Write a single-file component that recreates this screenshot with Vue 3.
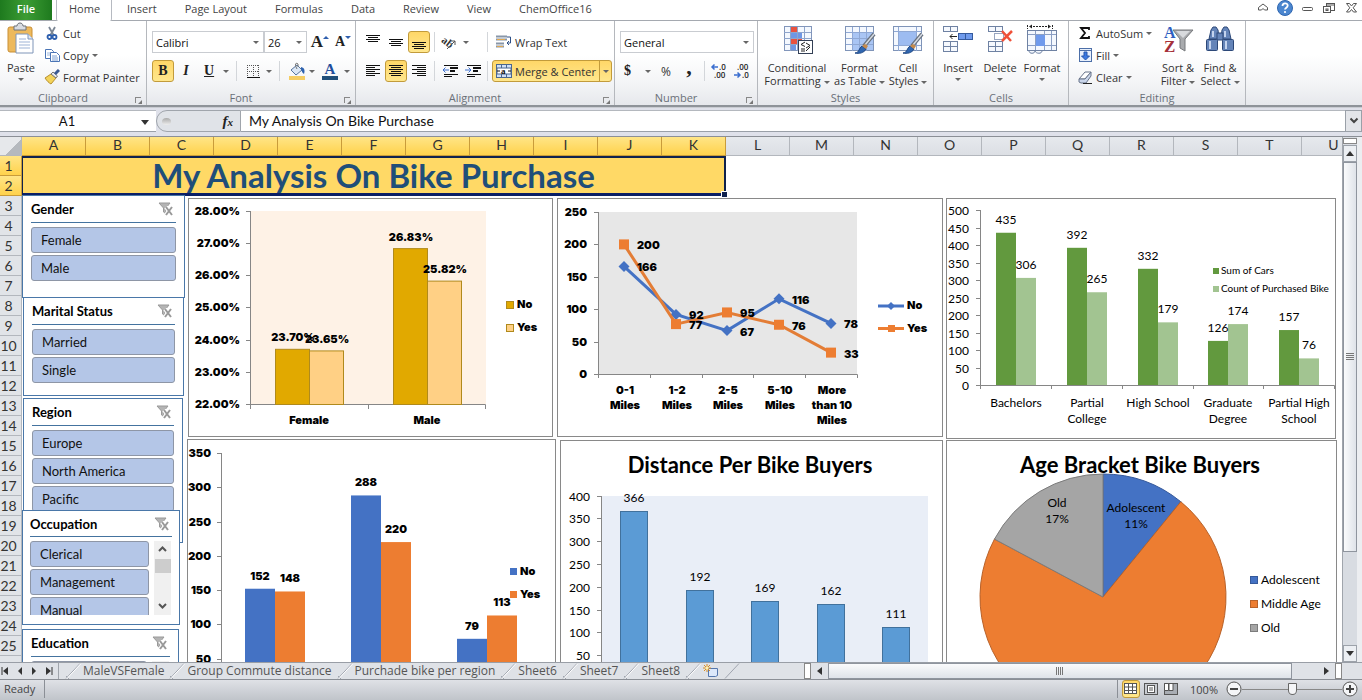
<script setup>
import { ref } from 'vue'

const tabs = ['Insert', 'Page Layout', 'Formulas', 'Data', 'Review', 'View', 'ChemOffice16']
const columns = 'ABCDEFGHIJKLMNOPQRSTU'.split('')
const sheets = ['MaleVSFemale', 'Group Commute distance', 'Purchade bike per region', 'Sheet6', 'Sheet7', 'Sheet8']
const formula = ref('My Analysis On Bike Purchase')
const cellName = ref('A1')
const zoom = ref(50)

const slicers = [
  { id: 'gender', title: 'Gender', items: ['Female', 'Male'] },
  { id: 'marital', title: 'Marital Status', items: ['Married', 'Single'] },
  { id: 'region', title: 'Region', items: ['Europe', 'North America', 'Pacific'] },
  { id: 'occupation', title: 'Occupation', items: ['Clerical', 'Management', 'Manual'], scroll: true },
  { id: 'education', title: 'Education', items: ['Bachelors'], scroll: true },
]

const rateY = (v) => 404 - (v - 22) * 32.17
const rates = [
  { x: 275, v: 23.7, tx: 293, c: '#e1a900' },
  { x: 309, v: 23.65, tx: 327, c: '#ffd085' },
  { x: 393, v: 26.83, tx: 411, c: '#e1a900' },
  { x: 427, v: 25.82, tx: 445, c: '#ffd085' },
]

const lineX = [624, 676, 727, 779, 831]
const lineY = (v) => 374 - v * 0.648
const series = {
  no: [166, 92, 67, 116, 78],
  yes: [200, 77, 95, 76, 33],
}
const points = (vals) => vals.map((v, i) => `${lineX[i]},${lineY(v)}`).join(' ')
const distances = [['0-1', 'Miles'], ['1-2', 'Miles'], ['2-5', 'Miles'], ['5-10', 'Miles'], ['More', 'than 10', 'Miles']]

const eduX = (i) => 1016 + Math.round(i * 70.8)
const eduY = (v) => 385 - v * 0.35
const education = [
  { label: ['Bachelors'], a: 435, b: 306 },
  { label: ['Partial', 'College'], a: 392, b: 265 },
  { label: ['High School'], a: 332, b: 179 },
  { label: ['Graduate', 'Degree'], a: 126, b: 174 },
  { label: ['Partial High', 'School'], a: 157, b: 76 },
]

const regionY = (v) => 693 - v * 0.686
const regions = [
  { x: 245, no: 152, yes: 148 },
  { x: 351, no: 288, yes: 220 },
  { x: 457, no: 79, yes: 113 },
]

const buyersY = (v) => 678 - v * 0.456
const buyers = [366, 192, 169, 162, 111].map((v, i) => ({ v, x: 620 + Math.round(i * 65.5) }))

const arc = (from, to) => {
  const p = (f) => `${1103 + 123 * Math.sin(f * 2 * Math.PI)} ${597 - 123 * Math.cos(f * 2 * Math.PI)}`
  return `M1103 597L${p(from)}A123 123 0 ${to - from > 0.5 ? 1 : 0} 1 ${p(to)}Z`
}
const slices = [
  { d: arc(0, 0.109), c: '#4472c4', s: '#35599b' },
  { d: arc(0.109, 0.828), c: '#ed7d31', s: '#b8622a' },
  { d: arc(0.828, 1), c: '#a5a5a5', s: '#7c7c7c' },
]
</script>

<template>
  <div class="app">
    <nav class="tabbar" aria-label="Ribbon tabs">
      <button class="file">File</button>
      <button class="tab active">Home</button>
      <button v-for="t in tabs" :key="t" class="tab">{{ t }}</button>
      <div class="winctl">
        <button aria-label="Minimize ribbon"><svg width="16" height="16" viewBox="0 0 16 16"><path d="M3.500 7.500L8 4l4.500 3.500v2.500h-3L8 8.500 6.500 10h-3z" fill="#fff" stroke="#555"/></svg></button>
        <button aria-label="Help"><svg width="16" height="16" viewBox="0 0 16 16"><circle cx="8" cy="8" r="7.500" fill="#4b86cf" stroke="#2f66b0"/><path d="M5.500 6c0-3.600 5.200-3.400 5.200-.4C10.700 7.600 8 7.800 8 9.600" fill="none" stroke="#fff" stroke-width="1.800"/><circle cx="8" cy="12" r="1.100" fill="#fff"/></svg></button>
        <button aria-label="Minimize"><svg width="16" height="16" viewBox="0 0 16 16"><rect x="3.500" y="7.500" width="10" height="3" rx="1" fill="#fff" stroke="#555"/></svg></button>
        <button aria-label="Restore"><svg width="16" height="16" viewBox="0 0 16 16" fill="#fff" stroke="#555"><rect x="5.500" y="3.500" width="8" height="7"/><path d="M5.500 5h8"/><rect x="2.500" y="6.500" width="7" height="6"/><rect x="5" y="9" width="2" height="1.500"/></svg></button>
        <button aria-label="Close"><svg width="16" height="16" viewBox="0 0 16 16"><path d="M3.500 3.500h3L8.500 6l2-2.500h3L10.200 7.800l3.300 4.200h-3l-2-2.500-2 2.500h-3l3.300-4.200z" fill="#fff" stroke="#555"/></svg></button>
      </div>
    </nav>

    <div class="ribbon">
      <section class="group clipboard">
        <div class="content">
          <button class="big">
            <svg width="32" height="34" viewBox="0 0 32 34"><rect x="3" y="5" width="24" height="25" rx="2" fill="#edb95c" stroke="#c98f35"/><path d="M9 8V4h3c0-4 6-4 6 0h3v4z" fill="#d8dce2" stroke="#6d7278"/><path d="M11 12h12l5 5v14H11z" fill="#fff" stroke="#7f95b8"/><path d="M23 12v5h5" fill="#dfe8f5" stroke="#7f95b8"/><path d="M14 17h7M14 20h11M14 23h11M14 26h11" stroke="#9db3d6"/></svg>
            <span>Paste</span><i class="arrow"></i>
          </button>
          <div class="stack">
            <button class="small"><svg width="16" height="16" viewBox="0 0 16 16"><path d="M5 2l4.500 8M11 2L6.500 10" stroke="#7b8694" stroke-width="1.800"/><circle cx="5.500" cy="12" r="2" fill="none" stroke="#2d5fae" stroke-width="1.800"/><circle cx="10.500" cy="12" r="2" fill="none" stroke="#2d5fae" stroke-width="1.800"/></svg>Cut</button>
            <button class="small"><svg width="16" height="16" viewBox="0 0 16 16" fill="#fff" stroke="#4a74b5"><path d="M1.500 2.500h6l2 2v7h-8z"/><path d="M3 6h4M3 8h4" stroke="#9db8de"/><path d="M6.500 5.500h6l3 3v6h-9z"/><path d="M8 9h5M8 11h6M8 13h6" stroke="#7d9fd2"/></svg>Copy<i class="arrow"></i></button>
            <button class="small"><svg width="16" height="16" viewBox="0 0 16 16"><path d="M1 9l6-4 5 4-5 6c-2-1-4-3-6-6z" fill="#f3d35a" stroke="#b78f2d"/><path d="M7 5l5 4 1.500-2-4.500-4z" fill="#e8ebf0" stroke="#777"/><path d="M11 5l4-4" stroke="#3b5a94" stroke-width="3"/></svg>Format Painter</button>
          </div>
        </div>
        <footer>Clipboard<i class="launch"></i></footer>
      </section>

      <section class="group font">
        <div class="rows">
          <div class="row">
            <label class="combo wide"><select aria-label="Font name"><option>Calibri</option></select><i class="arrow"></i></label>
            <label class="combo narrow"><select aria-label="Font size"><option>26</option></select><i class="arrow"></i></label>
            <button class="ic grow" aria-label="Increase font size"><b class="serif">A</b><i class="up"></i></button>
            <button class="ic shrink" aria-label="Decrease font size"><b class="serif">A</b><i class="down"></i></button>
          </div>
          <div class="row">
            <button class="ic on" aria-label="Bold"><b class="serif">B</b></button>
            <button class="ic" aria-label="Italic"><b class="serif it">I</b></button>
            <button class="split" aria-label="Underline"><b class="serif un">U</b><i class="arrow"></i></button>
            <i class="sep"></i>
            <button class="split" aria-label="Borders"><svg width="16" height="16" viewBox="0 0 16 16" shape-rendering="crispEdges"><path d="M2 2.500h12M2 8.500h12M2.500 2v11M8.500 2v11M13.500 2v11" stroke="#555" stroke-dasharray="1 1"/><path d="M2 14.500h13" stroke="#111"/></svg><i class="arrow"></i></button>
            <i class="sep"></i>
            <button class="split" aria-label="Fill color"><svg width="18" height="18" viewBox="0 0 18 18"><path d="M3 8l6-5 5 5-6 5z" fill="#dbe7f6" stroke="#55749d"/><path d="M9 7c-3-5-1-7 1-5v3" fill="none" stroke="#777"/><path d="M13 5c4 1 4 4 3 7-2-1-2-3-3-5z" fill="#2d62b0"/><rect x="1" y="14" width="16" height="4" fill="#f5cd63"/></svg><i class="arrow"></i></button>
            <button class="split color" aria-label="Font color"><b class="serif">A</b><i class="arrow"></i></button>
          </div>
        </div>
        <footer>Font<i class="launch"></i></footer>
      </section>

      <section class="group align">
        <div class="rows">
          <div class="row">
            <button class="ic" aria-label="Top align"><svg width="16" height="16" viewBox="0 0 16 16"><path d="M1 1.500h14M3 3.500h10M1 5.500h14M3 7.500h10" stroke="#111"/></svg></button>
            <button class="ic" aria-label="Middle align"><svg width="16" height="16" viewBox="0 0 16 16"><path d="M1 5.500h14M3 7.500h10M1 9.500h14M3 11.500h10" stroke="#111"/></svg></button>
            <button class="ic on" aria-label="Bottom align"><svg width="16" height="16" viewBox="0 0 16 16"><path d="M1 8.500h14M3 10.500h10M1 12.500h14M3 14.500h10" stroke="#111"/></svg></button>
            <i class="sep"></i>
            <button class="split orient" aria-label="Orientation"><svg width="18" height="16" viewBox="0 0 18 16"><text x="2" y="9" font-size="11" font-family="Liberation Serif, serif" font-weight="bold" fill="#333" transform="rotate(38 4 8)">ab</text><path d="M8 15l8-8M16 7h-4M16 7v4" stroke="#555" fill="none"/></svg><i class="arrow"></i></button>
            <i class="sep far"></i>
            <button class="small"><svg width="16" height="16" viewBox="0 0 16 16"><path d="M0 2.500h11M0 5.500h11M0 9.500h8M0 12.500h8" stroke="#8896a8" stroke-width="2"/><path d="M1 5.500h8M1 12.500h6" stroke="#e0a850"/><path d="M11 3h3.500v6H11M13 7l-2 2 2 2" fill="none" stroke="#2d4f86"/></svg>Wrap Text</button>
          </div>
          <div class="row">
            <button class="ic" aria-label="Align left"><svg width="16" height="16" viewBox="0 0 16 16"><path d="M1 2.500h14M1 4.500h9M1 6.500h14M1 8.500h9M1 10.500h14M1 12.500h9" stroke="#111"/></svg></button>
            <button class="ic on" aria-label="Center"><svg width="16" height="16" viewBox="0 0 16 16"><path d="M1 2.500h14M3 4.500h10M1 6.500h14M3 8.500h10M1 10.500h14M3 12.500h10" stroke="#111"/></svg></button>
            <button class="ic" aria-label="Align right"><svg width="16" height="16" viewBox="0 0 16 16"><path d="M1 2.500h14M6 4.500h9M1 6.500h14M6 8.500h9M1 10.500h14M6 12.500h9" stroke="#111"/></svg></button>
            <i class="sep"></i>
            <button class="ic" aria-label="Decrease indent"><svg width="16" height="16" viewBox="0 0 16 16"><path d="M2 2.500h14M2 11.500h14M2 13.500h8" stroke="#111"/><path d="M8 5h8M8 8h5" stroke="#111" stroke-width="2"/><path d="M7 7H1M3.500 4.500L1 7l2.500 2.500" stroke="#3b6fd0" fill="none"/></svg></button>
            <button class="ic" aria-label="Increase indent"><svg width="16" height="16" viewBox="0 0 16 16"><path d="M2 2.500h14M2 11.500h14M2 13.500h8" stroke="#111"/><path d="M8 5h8M8 8h5" stroke="#111" stroke-width="2"/><path d="M0 7h6M3.500 4.500L6 7 3.500 9.500" stroke="#3b6fd0" fill="none"/></svg></button>
            <i class="sep far"></i>
            <button class="small merge"><svg width="16" height="16" viewBox="0 0 16 16"><rect x=".5" y="1.500" width="15" height="13" fill="#cfdff5" stroke="#4a678f"/><path d="M5.500 1v4M10.500 1v4M5.500 11v4M10.500 11v4" stroke="#4a678f"/><rect x="1" y="5" width="14" height="6" fill="#fff" stroke="#4a678f"/><text x="5" y="10.500" font-size="9" font-weight="bold" font-family="Liberation Serif, serif" fill="#111">a</text><path d="M1 8h3M12 8h3" stroke="#111"/></svg>Merge &amp; Center<span class="drop"><i class="arrow"></i></span></button>
          </div>
        </div>
        <footer>Alignment<i class="launch"></i></footer>
      </section>

      <section class="group number">
        <div class="rows">
          <div class="row"><label class="combo full"><select aria-label="Number format"><option>General</option></select><i class="arrow"></i></label></div>
          <div class="row">
            <button class="split" aria-label="Currency"><b class="serif">$</b><i class="arrow"></i></button>
            <button class="ic sans">%</button>
            <button class="ic comma" aria-label="Comma style"><b class="serif">,</b></button>
            <i class="sep"></i>
            <button class="ic dec" aria-label="Increase decimal"><svg width="20" height="20" viewBox="0 0 20 20"><text x="9" y="9">.0</text><text x="4" y="17">.00</text><path d="M8 6H2M4.500 3.500L2 6l2.500 2.500" stroke="#3b6fd0" stroke-width="1.500" fill="none"/></svg></button>
            <button class="ic dec" aria-label="Decrease decimal"><svg width="20" height="20" viewBox="0 0 20 20"><text x="4" y="9">.00</text><text x="9" y="17">.0</text><path d="M1 14h6M4.500 11.500L7 14l-2.500 2.500" stroke="#3b6fd0" stroke-width="1.500" fill="none"/></svg></button>
          </div>
        </div>
        <footer>Number<i class="launch"></i></footer>
      </section>

      <section class="group styles">
        <div class="content">
          <button class="big w68">
            <svg width="32" height="34" viewBox="0 0 32 34"><rect x="3.500" y="4.500" width="27" height="24" fill="#f4f8fe" stroke="#8296bb"/><rect x="10" y="5" width="6" height="5" fill="#e8523f"/><rect x="10" y="11" width="11" height="5" fill="#6f97e4"/><rect x="10" y="17" width="11" height="5" fill="#e8523f"/><rect x="10" y="23" width="5" height="5" fill="#6f97e4"/><path d="M9.500 5v24M16.500 5v24M23.500 5v24M3 10.500h27M3 16.500h27M3 22.500h27" stroke="#8fa5cc" fill="none"/><rect x="17.500" y="18.500" width="14" height="13" fill="#fff" stroke="#333f55"/><path d="M24 20l-4 2.500 4 2M20 27h4M20 29h4M25 21l4 2.500-4 2.500M29 25l-4 4" stroke="#222" fill="none"/></svg>
            <span>Conditional</span><span>Formatting <i class="arrow"></i></span>
          </button>
          <button class="big w56">
            <svg width="32" height="34" viewBox="0 0 32 34"><rect x="1.500" y="4.500" width="28" height="24" fill="#f4f8fe" stroke="#7f94b8"/><rect x="9" y="11" width="20" height="17" fill="#a9c5f4"/><path d="M8.500 5v24M15.500 5v24M22.500 5v24M2 10.500h27M2 16.500h27M2 22.500h27" stroke="#8fa8d4"/><path d="M20 24L30 12" stroke="#68717e" stroke-width="4"/><path d="M21 23l9-11" stroke="#d5dae2" stroke-width="1.500"/><path d="M11 31c4 0 4-5 7-7l4 3c-2 4-7 5-11 4z" fill="#2f66b0" stroke="#1d4684"/><path d="M18 24l4 3 2-3-3-2z" fill="#c58a4b"/></svg>
            <span>Format</span><span>as Table <i class="arrow"></i></span>
          </button>
          <button class="big w40">
            <svg width="32" height="34" viewBox="0 0 32 34"><rect x="1.500" y="4.500" width="28" height="24" fill="#f4f8fe" stroke="#7f94b8"/><path d="M6.500 5v24M24.500 5v24M2 9.500h27M2 23.500h27" stroke="#8fa8d4"/><rect x="7" y="10" width="17" height="13" fill="#9dbcf1"/><path d="M20 24L30 12" stroke="#68717e" stroke-width="4"/><path d="M21 23l9-11" stroke="#d5dae2" stroke-width="1.500"/><path d="M11 31c4 0 4-5 7-7l4 3c-2 4-7 5-11 4z" fill="#2f66b0" stroke="#1d4684"/><path d="M18 24l4 3 2-3-3-2z" fill="#c58a4b"/></svg>
            <span>Cell</span><span>Styles <i class="arrow"></i></span>
          </button>
        </div>
        <footer>Styles</footer>
      </section>

      <section class="group cells">
        <div class="content">
          <button class="big w42">
            <svg width="32" height="34" viewBox="0 0 32 34"><g fill="#f6f9fe" stroke="#6f82a3"><rect x="1.500" y="4.500" width="14" height="5"/><rect x="1.500" y="19.500" width="14" height="10"/><path d="M8.500 4v6M8.500 20v10M1 24.500h15"/></g><rect x="16.500" y="11.500" width="14" height="6" fill="#6f9aec" stroke="#355a9d"/><path d="M23.500 11v7" stroke="#355a9d"/><path d="M15 14.500H8M10.500 12L8 14.500l2.500 2.500" stroke="#222" fill="none"/></svg>
            <span>Insert</span><i class="arrow"></i>
          </button>
          <button class="big w42">
            <svg width="32" height="34" viewBox="0 0 32 34"><g fill="#f6f9fe" stroke="#6f82a3"><rect x="4.500" y="4.500" width="14" height="5"/><rect x="4.500" y="19.500" width="14" height="10"/><path d="M11.500 4v6M11.500 20v10M4 24.500h15"/></g><rect x="10.500" y="11.500" width="9" height="6" fill="none" stroke="#334d80" stroke-dasharray="1 1"/><path d="M18 9l9 10M28 9l-10 10" stroke="#f05139" stroke-width="2.500"/></svg>
            <span>Delete</span><i class="arrow"></i>
          </button>
          <button class="big w42">
            <svg width="32" height="34" viewBox="0 0 32 34"><path d="M1.500 3v4M26.500 3v4M4 4.500h20" stroke="#222" stroke-dasharray="2 1"/><path d="M6 2.500L3 4.500l3 2zM22 2.500l3 2-3 2z" fill="#222"/><rect x="1.500" y="8.500" width="29" height="20" fill="#f4f8fe" stroke="#6f82a3"/><path d="M9.500 9v19M18.500 9v19M25.500 9v19M2 12.500h28M2 23.500h28" stroke="#8b9fc4"/><rect x="10" y="13" width="9" height="11" fill="#6f9aec"/><path d="M3 29c0 3 6 3 6 0 1 3 7 3 7 0" fill="#f4f8fe" stroke="#6f82a3"/></svg>
            <span>Format</span><i class="arrow"></i>
          </button>
        </div>
        <footer>Cells</footer>
      </section>

      <section class="group editing">
        <div class="content">
          <div class="stack">
            <button class="small"><svg width="16" height="16" viewBox="0 0 16 16"><path d="M12 5V3H4l4 5-4 5h8v-2" fill="none" stroke="#111" stroke-width="1.800"/></svg>AutoSum<i class="arrow"></i></button>
            <button class="small"><svg width="16" height="16" viewBox="0 0 16 16"><rect x="2.500" y="1.500" width="12" height="13" fill="#e8f0fc" stroke="#4d6fa8"/><path d="M3 3.500h11" stroke="#4d6fa8"/><path d="M7 5h3v4h2.500l-4 4-4-4H7z" fill="#3b78e0" stroke="#2457ac"/></svg>Fill<i class="arrow"></i></button>
            <button class="small"><svg width="16" height="16" viewBox="0 0 16 16"><path d="M2 10l6-7h6l-6 7z" fill="#fff" stroke="#68748a"/><path d="M2 10v3l2 1h5l5-7V3L8 10z" fill="#c9d5ea" stroke="#68748a"/><path d="M6 14.500h9" stroke="#222"/></svg>Clear<i class="arrow"></i></button>
          </div>
          <button class="big w42">
            <svg width="32" height="34" viewBox="0 0 32 34"><text x="2" y="16" font-size="16" font-weight="bold" font-family="Liberation Serif, serif" fill="#2f5fc0">A</text><text x="2" y="30" font-size="17" font-weight="bold" font-family="Liberation Serif, serif" fill="#a5303a">Z</text><path d="M11 8h20l-8 9v12l-5-3v-9z" fill="#a9abae" stroke="#77797c"/><path d="M14 9h14l-7 7z" fill="#d8dadd"/></svg>
            <span>Sort &amp;</span><span>Filter <i class="arrow"></i></span>
          </button>
          <button class="big w42">
            <svg width="32" height="34" viewBox="0 0 32 34"><g fill="#6484b8" stroke="#2c4878"><path d="M7 8l2-3h3l2 3 1 9H5z"/><path d="M18 8l2-3h3l2 3 2 9H17z"/><rect x="13" y="11" width="6" height="7"/><rect x="2.500" y="17.500" width="11" height="11" rx="1"/><rect x="18.500" y="17.500" width="11" height="11" rx="1"/></g><path d="M6 19v8M22 19v8M9 9v6M21 9v6" stroke="#c4d4ee" stroke-width="2"/></svg>
            <span>Find &amp;</span><span>Select <i class="arrow"></i></span>
          </button>
        </div>
        <footer>Editing</footer>
      </section>
    </div>

    <div class="formulabar">
      <input v-model="cellName" class="namebox" aria-label="Name box">
      <button class="namedrop" aria-label="Name list"><i class="arrow dark"></i></button>
      <div class="fxwrap"><i class="knob"></i><button class="fx" aria-label="Insert function">f<small>x</small></button></div>
      <input v-model="formula" class="formula" aria-label="Formula">
      <button class="expand" aria-label="Expand formula bar"><svg width="10" height="8" viewBox="0 0 10 8"><path d="M1.500 1.500L5 5l3.500-3.500" fill="none" stroke="#444" stroke-width="2"/></svg></button>
    </div>

    <main class="work">
      <div class="sheet">
        <table class="grid">
          <thead>
            <tr><th class="corner" aria-label="Select all"></th><th v-for="(c, i) in columns" :key="c" scope="col" :class="{ hot: i < 11 }">{{ c }}</th></tr>
          </thead>
          <tbody>
            <tr><th scope="row" class="hot">1</th><td colspan="11" rowspan="2" class="title">My Analysis On Bike Purchase</td><td colspan="10"></td></tr>
            <tr><th scope="row" class="hot">2</th><td colspan="10"></td></tr>
            <tr v-for="n in 23" :key="n"><th scope="row">{{ n + 2 }}</th><td colspan="21"></td></tr>
            <tr><th></th><td colspan="21"></td></tr>
          </tbody>
        </table>

        <div class="objects">
          <div class="slicers">
            <section v-for="s in slicers" :key="s.id" class="slicer" :class="s.id">
              <header><h3>{{ s.title }}</h3>
                <button aria-label="Clear filter"><svg width="16" height="14" viewBox="0 0 16 14"><path d="M1 1h11L8 6v6L5.500 10V6z" fill="#b4b4b4" stroke="#999"/><path d="M8 5l6 8M14 5l-6 8" stroke="#fff" stroke-width="4"/><path d="M8 5l6 8M14 5l-6 8" stroke="#999" stroke-width="2"/></svg></button>
              </header>
              <div class="slbody">
                <div class="items"><button v-for="it in s.items" :key="it">{{ it }}</button></div>
                <div v-if="s.scroll" class="slscroll">
                  <svg width="9" height="6" viewBox="0 0 9 6"><path d="M1 5l3.500-3.500L8 5" fill="none" stroke="#555" stroke-width="2"/></svg>
                  <i></i>
                  <svg width="9" height="6" viewBox="0 0 9 6"><path d="M1 1l3.500 3.500L8 1" fill="none" stroke="#555" stroke-width="2"/></svg>
                </div>
              </div>
            </section>
          </div>

          <div class="charts">
            <svg class="heavy" viewBox="187 197 369 242" role="img" aria-label="Purchase rate by gender">
              <rect class="frame" x="188.500" y="198.500" width="364" height="238" />
              <rect x="251" y="211" width="235" height="193" fill="#fef2e6" />
              <path class="axis" d="M250.500 211V409M247 404.500H485.500V409M368.500 404V409" />
              <g v-for="n in 7" :key="n">
                <path class="axis" :d="`M246 ${Math.round(rateY(21 + n)) + 0.5}h4`" />
                <text class="end" x="240" :y="Math.round(rateY(21 + n)) + 4">{{ 21 + n }}.00%</text>
              </g>
              <rect v-for="b in rates" :key="'b' + b.x" :x="b.x + 0.5" :y="rateY(b.v)" width="34" :height="404.5 - rateY(b.v)" :fill="b.c" stroke="#b08a1c" />
              <text v-for="b in rates" :key="'t' + b.x" :x="b.tx" :y="rateY(b.v) - 8">{{ b.v.toFixed(2) }}%</text>
              <text x="309" y="424">Female</text><text x="427" y="424">Male</text>
              <rect x="506.500" y="301.500" width="7" height="7" fill="#e1a900" stroke="#b08a1c" /><text class="start" x="517" y="308">No</text>
              <rect x="506.500" y="324.500" width="7" height="7" fill="#ffd085" stroke="#b08a1c" /><text class="start" x="517" y="331">Yes</text>
            </svg>

            <svg class="heavy" viewBox="556 197 388 242" role="img" aria-label="Purchases by commute distance">
              <rect class="frame" x="557.500" y="198.500" width="385" height="238" />
              <rect x="599" y="212" width="258" height="162" fill="#e7e7e7" />
              <path class="axis" d="M598.500 212V378M594 374.500H857.500V378M650.500 374v4M702.500 374v4M753.500 374v4M805.500 374v4" />
              <g v-for="n in 6" :key="n">
                <path class="axis" :d="`M594 ${Math.round(lineY(n * 50 - 50)) + 0.5}h4`" />
                <text class="end" x="587" :y="lineY(n * 50 - 50) + 4">{{ n * 50 - 50 }}</text>
              </g>
              <polyline :points="points(series.no)" fill="none" stroke="#4472c4" stroke-width="3" />
              <path v-for="(v, i) in series.no" :key="'n' + i" :d="`M${lineX[i]} ${lineY(v) - 5.5}l5.500 5.500-5.500 5.500-5.500-5.500z`" fill="#4472c4" />
              <polyline :points="points(series.yes)" fill="none" stroke="#e37d36" stroke-width="3" />
              <rect v-for="(v, i) in series.yes" :key="'y' + i" :x="lineX[i] - 5" :y="lineY(v) - 5" width="10" height="10" fill="#ed7d31" />
              <template v-for="(vals, k) in series" :key="k">
                <text v-for="(v, i) in vals" :key="k + i" class="start" :x="lineX[i] + 13" :y="lineY(v) + 5">{{ v }}</text>
              </template>
              <template v-for="(d, i) in distances" :key="'d' + i">
                <text v-for="(l, j) in d" :key="l" :x="lineX[i] + 1" :y="394 + j * 15">{{ l }}</text>
              </template>
              <path d="M878 306h26" stroke="#4472c4" stroke-width="3" /><path d="M891 302l4 4-4 4-4-4z" fill="#4472c4" />
              <text class="start" x="907" y="309">No</text>
              <path d="M878 328.500h26" stroke="#ed7d31" stroke-width="3" /><rect x="888" y="325" width="7" height="7" fill="#ed7d31" />
              <text class="start" x="907" y="332">Yes</text>
            </svg>

            <svg class="light" viewBox="944 197 394 242" role="img" aria-label="Cars and purchases by education">
              <rect class="frame" x="946.500" y="198.500" width="389" height="240" />
              <path class="axis" d="M980.500 210V389M976 385.500H1334.500V389M1051.500 385v4M1122.500 385v4M1193.500 385v4M1263.500 385v4" />
              <g v-for="n in 11" :key="n">
                <path class="axis" :d="`M976 ${Math.round(eduY(n * 50 - 50)) + 0.5}h4`" />
                <text class="end" x="969" :y="eduY(n * 50 - 50) + 5">{{ n * 50 - 50 }}</text>
              </g>
              <g v-for="(e, i) in education" :key="i">
                <rect :x="eduX(i) - 20" :y="eduY(e.a)" width="20" :height="385 - eduY(e.a)" fill="#62993e" />
                <rect :x="eduX(i)" :y="eduY(e.b)" width="20" :height="385 - eduY(e.b)" fill="#a2c491" />
                <text :x="eduX(i) - 10" :y="eduY(e.a) - 9">{{ e.a }}</text>
                <text :x="eduX(i) + 10" :y="eduY(e.b) - 9">{{ e.b }}</text>
                <text v-for="(l, j) in e.label" :key="l" :x="eduX(i)" :y="407 + j * 16">{{ l }}</text>
              </g>
              <rect x="1213" y="268" width="6" height="6" fill="#62993e" /><text class="start tiny" x="1221" y="274">Sum of Cars</text>
              <rect x="1213" y="286" width="6" height="6" fill="#a2c491" /><text class="start tiny" x="1221" y="292">Count of Purchased Bike</text>
            </svg>

            <svg class="heavy" viewBox="187 439 369 280" role="img" aria-label="Purchases by region">
              <rect class="frame" x="187.500" y="439.500" width="368" height="279" />
              <path class="axis" d="M221.500 453V693.500H540" />
              <g v-for="n in 8" :key="n">
                <path class="axis" :d="`M217 ${Math.round(regionY(n * 50 - 50)) + 0.5}h4`" />
                <text class="end" x="211" :y="regionY(n * 50 - 50) + 4">{{ n * 50 - 50 }}</text>
              </g>
              <g v-for="r in regions" :key="r.x">
                <rect :x="r.x" :y="regionY(r.no)" width="30" :height="693 - regionY(r.no)" fill="#4472c4" />
                <rect :x="r.x + 30" :y="regionY(r.yes)" width="30" :height="693 - regionY(r.yes)" fill="#ed7d31" />
                <text :x="r.x + 15" :y="regionY(r.no) - 9">{{ r.no }}</text>
                <text :x="r.x + 45" :y="regionY(r.yes) - 9">{{ r.yes }}</text>
              </g>
              <rect x="510" y="568" width="7" height="7" fill="#4472c4" /><text class="start" x="520" y="575">No</text>
              <rect x="510" y="591" width="7" height="7" fill="#ed7d31" /><text class="start" x="520" y="598">Yes</text>
            </svg>

            <svg class="light" viewBox="556 439 388 280" role="img" aria-label="Distance per bike buyers">
              <rect class="frame" x="560.500" y="440.500" width="382" height="278" />
              <text class="ctitle" x="750" y="473">Distance Per Bike Buyers</text>
              <rect x="602" y="496" width="326" height="182" fill="#e9eef7" />
              <path class="axis" d="M601.500 496V678.500H928" />
              <g v-for="n in 9" :key="n">
                <path class="axis" :d="`M597 ${Math.round(buyersY(n * 50 - 50)) + 0.5}h4`" />
                <text class="end" x="590" :y="buyersY(n * 50 - 50) + 5">{{ n * 50 - 50 }}</text>
              </g>
              <g v-for="b in buyers" :key="b.v">
                <rect :x="b.x + 0.5" :y="Math.round(buyersY(b.v)) + 0.5" width="27" :height="678 - buyersY(b.v)" fill="#5b9bd5" stroke="#41719c" />
                <text :x="b.x + 14" :y="buyersY(b.v) - 9">{{ b.v }}</text>
              </g>
            </svg>

            <svg class="light" viewBox="944 439 394 280" role="img" aria-label="Age bracket of bike buyers">
              <rect class="frame" x="946.500" y="440.500" width="390" height="278" />
              <path v-for="s in slices" :key="s.c" :d="s.d" :fill="s.c" :stroke="s.s" />
              <text class="ctitle" x="1140" y="473">Age Bracket Bike Buyers</text>
              <text x="1057" y="507">Old</text><text x="1057" y="523">17%</text>
              <text x="1136" y="512">Adolescent</text><text x="1136" y="528">11%</text>
              <rect x="1250.500" y="576.500" width="7" height="7" fill="#4472c4" stroke="#35599b" /><text class="start" x="1261" y="584">Adolescent</text>
              <rect x="1250.500" y="600.500" width="7" height="7" fill="#ed7d31" stroke="#b8622a" /><text class="start" x="1261" y="608">Middle Age</text>
              <rect x="1250.500" y="624.500" width="7" height="7" fill="#a5a5a5" stroke="#7c7c7c" /><text class="start" x="1261" y="632">Old</text>
            </svg>
          </div>
        </div>
      </div>

      <div class="vscroll">
        <i class="vsplit"></i>
        <button aria-label="Scroll up"><i class="tri up"></i></button>
        <div class="vthumb"><i class="grip"></i></div>
        <div class="vtrack"></div>
        <button aria-label="Scroll down"><i class="tri down"></i></button>
      </div>
    </main>

    <div class="sheetbar">
      <div class="nav">
        <button aria-label="First sheet"><svg width="8" height="8" viewBox="0 0 8 8"><path d="M1 0v8" stroke="#333"/><path d="M7 0v8L2 4z" fill="#333"/></svg></button>
        <button aria-label="Previous sheet"><svg width="8" height="8" viewBox="0 0 8 8"><path d="M6 0v8L2 4z" fill="#333"/></svg></button>
        <button aria-label="Next sheet"><svg width="8" height="8" viewBox="0 0 8 8"><path d="M2 0v8l4-4z" fill="#333"/></svg></button>
        <button aria-label="Last sheet"><svg width="8" height="8" viewBox="0 0 8 8"><path d="M7 0v8" stroke="#333"/><path d="M1 0v8l5-4z" fill="#333"/></svg></button>
      </div>
      <div class="stabs">
        <template v-for="s in sheets" :key="s">
          <svg class="slash" width="16" height="16" viewBox="0 0 16 16"><path d="M1 15.500L15 .5M1 13l3 3" stroke="#a0a6af" fill="none"/><path d="M2 15.500L16 .5" stroke="#fff"/></svg>
          <button>{{ s }}</button>
        </template>
        <svg class="slash" width="16" height="16" viewBox="0 0 16 16"><path d="M1 15.500L15 .5M1 13l3 3" stroke="#a0a6af" fill="none"/><path d="M2 15.500L16 .5" stroke="#fff"/></svg>
        <button aria-label="Insert worksheet"><svg width="16" height="14" viewBox="0 0 16 14"><path d="M5.500 4.500h9v7l-2 1h-7z" fill="#dce8fa" stroke="#5577ad"/><path d="M4 0v8M0 4h8M1 1l6 6M7 1L1 7" stroke="#d98e24"/><circle cx="4" cy="4" r="1.500" fill="#fff3b0"/></svg></button>
        <svg class="slash" width="16" height="16" viewBox="0 0 16 16"><path d="M1 15.500L15 .5" stroke="#a0a6af"/></svg>
      </div>
      <div class="hscroll">
        <i class="hsplit"></i>
        <button aria-label="Scroll left"><i class="tri left"></i></button>
        <div class="hthumb"><i class="grip v"></i></div>
        <div class="htrack"></div>
        <button aria-label="Scroll right"><i class="tri right"></i></button>
        <i class="hsplit"></i>
      </div>
      <div class="cornerbox"></div>
    </div>

    <footer class="status">
      <span class="ready">Ready</span>
      <div class="views">
        <button class="on" aria-label="Normal view"><svg width="14" height="12" viewBox="0 0 14 12"><rect x=".5" y=".5" width="12" height="10" fill="#fff" stroke="#555"/><path d="M4.500 0v11M8.500 0v11M0 4h13M0 7.500h13" stroke="#555"/></svg></button>
        <button aria-label="Page layout view"><svg width="14" height="12" viewBox="0 0 14 12"><rect x=".5" y=".5" width="13" height="11" fill="#c9ccd1" stroke="#555"/><rect x="3.500" y="2.500" width="7" height="7" fill="#fff" stroke="#555"/><path d="M5 5h4M5 7h4" stroke="#555"/></svg></button>
        <button aria-label="Page break view"><svg width="14" height="12" viewBox="0 0 14 12"><rect x=".5" y=".5" width="13" height="11" fill="#a9adb3" stroke="#555"/><path d="M.5 .5h4v7h-4zM5 .5h4v7H5z" fill="#fff" stroke="#555"/></svg></button>
      </div>
      <button class="pct">100%</button>
      <button class="round" aria-label="Zoom out"><svg width="16" height="16" viewBox="0 0 16 16"><circle cx="8" cy="8" r="7" fill="#f4f5f7" stroke="#555"/><path d="M4 8h8" stroke="#444" stroke-width="2"/></svg></button>
      <input v-model="zoom" type="range" class="zoom" aria-label="Zoom">
      <button class="round" aria-label="Zoom in"><svg width="16" height="16" viewBox="0 0 16 16"><circle cx="8" cy="8" r="7" fill="#f4f5f7" stroke="#555"/><path d="M4 8h8M8 4v8" stroke="#444" stroke-width="2"/></svg></button>
    </footer>
  </div>
</template>

<style>
body { margin: 0; overflow: hidden; }
</style>

<style scoped>
.app { --ui: "Open Sans", "Noto Sans", sans-serif; --cell: Lato, "Open Sans", sans-serif; display: flex; flex-direction: column; height: 100vh; font: 11px/13px var(--ui); color: #333; background: #fff; overflow: hidden; }
* { box-sizing: border-box; }
button, input, select { font: inherit; color: inherit; background: none; border: 0; padding: 0; margin: 0; border-radius: 0; outline: 0; }
button { white-space: nowrap; }
svg { display: block; flex: none; }
h3 { margin: 0; }
.arrow { flex: none; display: inline-block; border: 3px solid transparent; border-top-color: #666; border-bottom: 0; vertical-align: middle; }
.arrow.dark { border-width: 5px 4px 0; border-top-color: #333; }

.tabbar { display: flex; flex: none; height: 21px; border-bottom: 1px solid #a5a9b0; color: #444; }
.file { width: 52px; margin-right: 4px; height: 20px; padding-bottom: 3px; background: linear-gradient(90deg, #1e7a1e, #3c9c34 50%, #1e7a1e); color: #fff; font-weight: 600; }
.tab { padding: 0 14px 3px; height: 20px; }
.tab.active { height: 21px; width: 56px; padding: 0 12px 4px; margin-bottom: -1px; background: #fff; border: 1px solid #b6bac1; border-width: 0 1px; border-radius: 0 0 2px 2px; margin-right: 1px; }
.winctl { display: flex; margin-left: auto; padding-right: 3px; gap: 6px; align-items: flex-start; }

.ribbon { display: flex; flex: none; height: 86px; background: linear-gradient(#fff 40%, #f3f4f6 75%, #e6e8ec); border-bottom: 2px solid #8e9399; }
.group { flex: none; display: flex; flex-direction: column; border-right: 1px solid #b5b8bd; }
.clipboard { width: 147px; } .font { width: 209px; } .align { width: 259px; } .number { width: 143px; } .styles { width: 176px; } .cells { width: 135px; } .editing { width: 177px; }
.content { display: flex; height: 69px; padding: 1px 3px 0; }
.styles .content { padding-left: 5px; }
.rows { height: 69px; padding: 10px 5px 0; display: flex; flex-direction: column; gap: 7px; }
.align .rows { padding-left: 6px; padding-right: 2px; }
.row { display: flex; height: 22px; align-items: center; gap: 1px; }
.group footer { position: relative; text-align: center; color: #6a7078; height: 15px; padding: 1px 20px 0 0; line-height: 13px; }
.styles footer, .cells footer, .editing footer { padding-right: 0; }
.launch { position: absolute; right: 5px; bottom: 2px; width: 6px; height: 6px; border: 1px solid #888; border-width: 1px 0 0 1px; }
.launch::after { content: ""; position: absolute; right: -1px; bottom: -1px; border: 2px solid transparent; border-right-color: #777; border-bottom-color: #777; }
.big { display: flex; flex-direction: column; align-items: center; width: 36px; height: 66px; }
.big > .arrow { margin-top: 4px; }
.big > svg { margin-bottom: 5px; }
.w68 { width: 68px; } .w56 { width: 57px; } .w40 { width: 40px; } .w42 { width: 42px; }
.stack { display: flex; flex-direction: column; padding-left: 5px; align-items: flex-start; }
.small { display: flex; align-items: center; height: 22px; gap: 3px; }
.editing .stack { width: 85px; }
.editing .content { padding-right: 0; }
.ic { width: 22px; height: 22px; display: flex; align-items: center; justify-content: center; flex: none; }
.on { background: linear-gradient(#ffd768, #ffe78d); border: 1px solid #c29b3b; border-radius: 3px; }
.split { width: 34px; height: 22px; display: flex; align-items: center; justify-content: space-between; padding: 0 3px 0 4px; flex: none; }
.sep { width: 1px; height: 20px; background: #d3d6da; margin: 0 3px; flex: none; }
.row .sep.far { margin-left: auto; }
.orient { width: 30px; padding: 0; }
.align .row .small { width: 120px; padding: 0 0 0 4px; }
.align .row .merge { border: 1px solid #c29b3b; border-radius: 3px; padding-left: 3px; background: linear-gradient(#ffd768, #ffe78d); }
.drop { margin-left: auto; width: 12px; height: 20px; display: flex; align-items: center; justify-content: center; border-left: 1px solid #c29b3b; flex: none; }
.serif { font: bold 14px/16px "Liberation Serif", serif; color: #222; }
.it { font-style: italic; } .un { text-decoration: underline; padding-left: 2px; }
.grow .serif { font-size: 17px; } .shrink .serif { font-size: 14px; }
.grow .up, .shrink .down { border: 3px solid transparent; align-self: flex-start; margin-top: 5px; }
.grow .up { border-top: 0; border-bottom-color: #2f5fae; } .shrink .down { border-bottom: 0; border-top-color: #2f5fae; }
.color .serif { font-size: 15px; color: #1f4e9d; border-bottom: 4px solid #1f4e79; width: 16px; line-height: 14px; text-align: center; }
.color { padding: 0 3px; }
.sans { font-size: 12px; }
.comma .serif { font-size: 22px; line-height: 6px; padding-bottom: 8px; }
.dec text { font: 600 8px var(--ui); fill: #222; }
.combo { position: relative; height: 22px; border: 1px solid #c9ccd1; background: #fff; flex: none; display: flex; align-items: center; }
.combo select { appearance: none; width: 100%; height: 20px; padding-left: 3px; color: #111; }
.combo .arrow { position: absolute; right: 4px; pointer-events: none; }
.wide { width: 112px; } .narrow { width: 43px; margin-left: -1px; margin-right: 1px; } .full { width: 134px; }

.formulabar { display: flex; flex: none; height: 30px; padding: 2px 0 6px; background: #dfe1ea; border-top: 1px solid #c9ccd2; border-bottom: 1px solid #8b8f96; }
.formulabar > * { height: 22px; background: #fff; border-bottom: 1px solid #9aa0a8; border-top: 1px solid #b4b8be; }
.namebox { width: 134px; text-align: center; font: 13px/18px var(--cell); color: #111; padding-bottom: 1px; }
.namedrop { width: 22px; }
.fxwrap { display: flex; width: 85px; background: #e0e3e8; border: 1px solid #a0a5ac; border-radius: 12px 0 0 12px; align-items: center; justify-content: space-between; padding: 0 7px 0 5px; }
.knob { width: 9px; height: 7px; border-radius: 50%; background: linear-gradient(#aaa, #eee); }
.fx { font: italic bold 15px/16px "Liberation Serif", serif; color: #222; }
.fx small { font-size: 11px; }
.formula { flex: 1; min-width: 0; padding: 0 0 1px 8px; font: 14px/19px var(--cell); color: #111; }
.expand { width: 17px; display: flex; align-items: center; justify-content: center; background: #e3e5e9; border: 1px solid #9aa0a8; }

.work { display: flex; flex: 1; min-height: 0; }
.sheet { position: relative; flex: 1; min-width: 0; overflow: hidden; }
.grid { border-collapse: separate; border-spacing: 0; table-layout: fixed; width: 1366px; }
.grid th { font: 14px/17px var(--cell); color: #333; padding: 0; width: 64px; background: #e1e4e8; border: 1px solid #b3b7bd; border-width: 0 1px 1px 0; text-align: center; }
.grid tr { height: 20px; }
.grid thead tr { height: 19px; }
.grid thead th { background: linear-gradient(#e6e9ed, #dcdfe4); height: 19px; line-height: 16px; padding-bottom: 2px; }
.grid thead th.corner { width: 22px; background: linear-gradient(135deg, #e6e8eb 60%, #b5b9be 60%); }
.grid th.hot, .grid thead th.hot { background: linear-gradient(#ffe587, #ffd24c); border-color: #c99c3a; }
.grid tbody th { padding-right: 4px; }
.grid td { padding: 0; }
.grid .title { position: relative; background: #ffd966; border: 2px solid #10224d; border-left-width: 1px; border-bottom: 3px solid #0a1f66; text-align: center; font: bold 33px/35px var(--cell); color: #1f4e79; }
.title::after { content: ""; position: absolute; right: -3px; bottom: -4px; width: 5px; height: 5px; background: #10224d; border: 1px solid #fff; border-width: 1px 0 0 1px; }
.objects { position: absolute; top: 58px; left: 22px; right: 0; display: flex; align-items: flex-start; }
.slicers { width: 165px; flex: none; font: 13px/22px var(--cell); color: #111; display: flex; flex-direction: column; }
.slicer { position: relative; background: #fff; border: 1px solid #4a77a8; padding: 0 8px; width: 160px; overflow: hidden; margin-left: 1px; }
.slicer header { display: flex; justify-content: space-between; align-items: center; height: 27px; border-bottom: 1px solid #44739f; padding-right: 2px; }
.slicer h3 { font: bold 13px/20px var(--cell); color: #000; }
.items { display: flex; flex-direction: column; gap: 2px; flex: 1; overflow: hidden; }
.items button { flex: none; height: 26px; text-align: left; padding-left: 9px; border: 1px solid #8e96a6; border-radius: 3px; background: #b4c6e7; }
.slbody { display: flex; padding-top: 4px; }
.gender { height: 103px; width: 163px; margin-left: 0; }
.marital { height: 99px; margin-top: -1px; width: 161px; }
.region { height: 145px; margin-top: 2px; }
.occupation { height: 115px; width: 158px; margin: -33px 0 0; padding: 0 7px; }
.education { height: 110px; width: 157px; margin: 4px 0 0; }
.occupation header { height: 26px; }
.occupation .slbody { height: 78px; }
.slscroll { width: 17px; margin: 0 1px 0 5px; background: #f0f0f0; display: flex; flex-direction: column; align-items: center; padding: 5px 0 6px; }
.slscroll i { width: 16px; height: 14px; background: #cdcdcd; margin: 7px 0 auto; }
.charts { flex: 1; min-width: 0; display: grid; grid-template-columns: 369fr 388fr 394fr; padding: 2px 4px 0 0; align-items: start; }
.charts svg { width: 100%; height: auto; }
.frame { fill: #fff; stroke: #898989; }
.axis { fill: none; stroke: #868686; }
.charts text { text-anchor: middle; fill: #000; }
.charts .start { text-anchor: start; } .charts .end { text-anchor: end; }
.heavy text { font: 900 11px Inter, sans-serif; }
.light text { font: 12px var(--cell); }
.light text.tiny { font-size: 10px; }
.light text.ctitle { font: bold 22px var(--cell); }

.vscroll { width: 20px; flex: none; background: #d8dce2; border-right: 5px solid #eceef1; display: flex; flex-direction: column; border-left: 1px solid #a0a5ac; }
.vscroll button { height: 17px; flex: none; display: flex; align-items: center; justify-content: center; background: #eceff3; border: 1px solid #9ca2aa; }
.vsplit { height: 6px; margin: 1px 0; border: 1px solid #888; background: #fff; }
.vthumb { flex: 391 1 0; border: 1px solid #8f959e; background: linear-gradient(90deg, #fafbfc, #dfe3e9); display: flex; align-items: center; justify-content: center; }
.vtrack { flex: 94 1 0; }
.grip { width: 8px; height: 8px; background: repeating-linear-gradient(#777 0 1px, transparent 1px 2px); }
.grip.v { background: repeating-linear-gradient(90deg, #777 0 1px, transparent 1px 2px); }
.tri { border: 4px solid transparent; margin: 0; align-self: center; }
.tri.up { border-top: 0; border-bottom: 5px solid #333; } .tri.down { border-bottom: 0; border-top: 5px solid #333; }
.tri.left { border-left: 0; border-right: 5px solid #333; } .tri.right { border-right: 0; border-left: 5px solid #333; }

.sheetbar { display: flex; flex: none; height: 17px; background: #dfe2e7; border-top: 1px solid #999ea6; font-size: 12px; line-height: 14px; color: #555; }
.nav { display: flex; width: 59px; border-right: 1px solid #a0a5ac; justify-content: space-between; padding: 0 5px 0 1px; align-items: center; }
.stabs { display: flex; flex: 1; min-width: 0; padding-left: 6px; }
.stabs button { padding: 0 5px 0 2px; }
.hscroll { width: 538px; display: flex; }
.hsplit { width: 7px; border: 1px solid #888; background: #fff; flex: none; }
.hscroll button { width: 17px; flex: none; display: flex; justify-content: center; align-items: center; }
.hthumb { flex: 463 1 0; border: 1px solid #8f959e; background: linear-gradient(#fafbfc, #dfe3e9); display: flex; align-items: center; justify-content: center; }
.htrack { flex: 26 1 0; }
.cornerbox { width: 20px; }

.status { display: flex; flex: none; height: 21px; align-items: center; background: linear-gradient(#dfe1e6, #c0c4ca); border-top: 1px solid #8b8f96; padding: 0 4px 2px; color: #444; }
.ready { border-right: 1px solid #8b8f96; padding-right: 9px; line-height: 18px; margin-right: auto; }
.views { display: flex; gap: 2px; padding-left: 4px; border-left: 1px solid #8b8f96; height: 18px; align-items: center; }
.views button { width: 18px; height: 18px; display: flex; align-items: center; justify-content: center; }
.pct { margin: 0 8px 0 10px; }
.zoom { appearance: none; width: 100px; height: 16px; background: linear-gradient(#888, #888) center / 100% 1px no-repeat; }
.zoom::-webkit-slider-thumb { appearance: none; width: 9px; height: 12px; background: #f4f5f7; border: 1px solid #666; border-radius: 1px 1px 5px 5px; }
</style>
